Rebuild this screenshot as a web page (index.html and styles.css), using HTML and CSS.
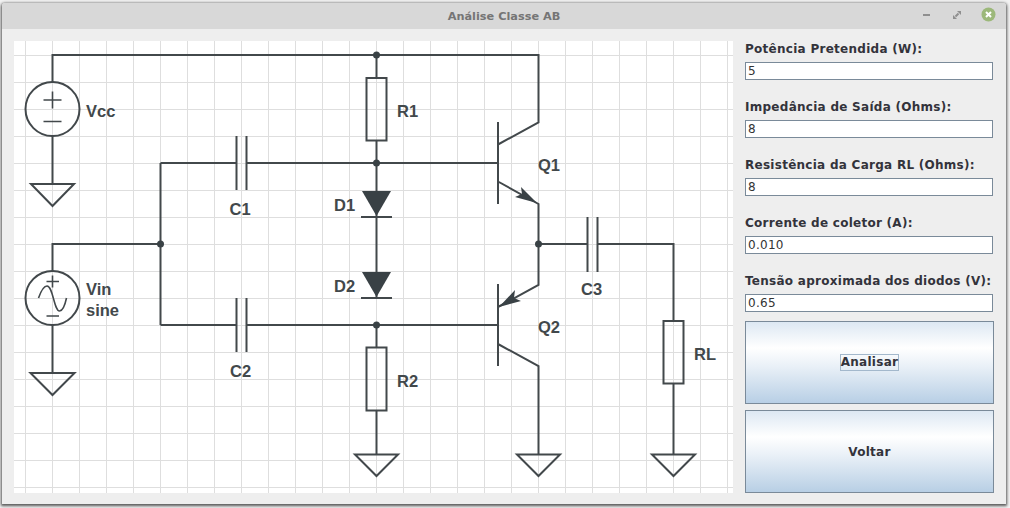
FILE: index.html
```html
<!DOCTYPE html>
<html lang="pt">
<head>
<meta charset="utf-8">
<title>Análise Classe AB</title>
<link rel="stylesheet" href="styles.css">
</head>
<body>
<div class="window">
  <header class="titlebar">
    <span class="title">Análise Classe AB</span>
    <div class="controls">
      <svg class="ctl" width="12" height="12" viewBox="0 0 12 12"><rect x="2" y="5" width="7" height="2" fill="#8f8f8f"/></svg>
      <svg class="ctl" width="12" height="12" viewBox="0 0 12 12"><path d="M6 2H10V6ZM2 6V10H6Z" fill="#8f8f8f"/><path d="M4.500 7.500L7.500 4.500" stroke="#8f8f8f" stroke-width="2"/></svg>
      <svg class="ctl close" width="15" height="15" viewBox="0 0 15 15"><circle cx="7.500" cy="7.500" r="7" fill="#9cb87a"/><path d="M5 5l5 5M10 5l-5 5" stroke="#fff" stroke-width="2"/></svg>
    </div>
  </header>
  <main class="content">
    <div class="canvas">
      <svg class="circuit" width="719" height="452" viewBox="14 41 719 452">
        <g class="wire">
          <path d="M52.500 82V55H538.500V122.500L498 144.500"/>
          <circle cx="52.500" cy="109" r="27"/>
          <path d="M52.500 136V184M31 184H74L52.500 206Z"/>
          <path d="M43.500 100H61.500M52.500 91.500V108.500M43.500 121.500H61.500" class="thin"/>
          <path d="M52.500 271V244H160.500M160.500 163V325"/>
          <circle cx="52.500" cy="298" r="27"/>
          <path d="M52.500 325V373M30.500 373H74.500L52.500 395Z"/>
          <path d="M46.500 281.500H59M52.500 275.500V287.500M46.500 316H59" class="thin"/>
          <path d="M38.500 298C41 291 44 286 47 286C53 286 54 311 59.500 311C63 311 65 305 66.500 298" class="thin"/>
          <path d="M160.500 163H236.500M246.500 163H498M236.500 136V190M246.500 136V190"/>
          <path d="M160.500 325H236.500M246.500 325H498M236.500 298V352M246.500 298V352"/>
          <path d="M376.500 55V78M376.500 141V298M376.500 325V347M376.500 411V454.500"/>
          <rect x="366.500" y="78" width="20" height="62.500"/>
          <rect x="366.500" y="347.500" width="20" height="63"/>
          <path d="M361 217H392M361 298H392"/>
          <path d="M355 454.500H398L376.500 476Z"/>
          <path d="M498 122V204M498 181.500L538.500 204V285L498 307M498 284V366M498 344L538.500 366V454.500"/>
          <path d="M517 454.500H560L538.500 476Z"/>
          <path d="M538.500 244H587.500M597.500 244H673.500V321M587.500 217V272M597.500 217V272"/>
          <rect x="663.500" y="321" width="20" height="62.500"/>
          <path d="M673.500 383.500V454.500M652 454.500H695L673.500 476Z"/>
        </g>
        <g class="solid">
          <circle cx="376.500" cy="55" r="3.500"/>
          <circle cx="160.500" cy="244" r="3.500"/>
          <circle cx="376.500" cy="163" r="3.500"/>
          <circle cx="376.500" cy="325" r="3.500"/>
          <circle cx="538.500" cy="244" r="3.500"/>
          <path d="M362 191H391L376.500 216Z"/>
          <path d="M362 272H391L376.500 297Z"/>
          <path d="M537 203L515 197L522 194L521 187Z"/>
          <path d="M499 307L515 290L514 298L521 301Z"/>
        </g>
        <g class="label">
          <text x="86" y="117">Vcc</text>
          <text x="397" y="117">R1</text>
          <text x="538" y="171">Q1</text>
          <text x="229.500" y="215">C1</text>
          <text x="334" y="211">D1</text>
          <text x="334" y="292">D2</text>
          <text x="86" y="295">Vin</text>
          <text x="86" y="316">sine</text>
          <text x="230" y="377">C2</text>
          <text x="397" y="387">R2</text>
          <text x="538" y="333">Q2</text>
          <text x="581" y="295">C3</text>
          <text x="694" y="360">RL</text>
        </g>
      </svg>
    </div>
    <aside class="panel">
      <label class="field"><span class="caption">Potência Pretendida (W):</span><input class="input" type="text" value="5"></label>
      <label class="field"><span class="caption">Impedância de Saída (Ohms):</span><input class="input" type="text" value="8"></label>
      <label class="field"><span class="caption">Resistência da Carga RL (Ohms):</span><input class="input" type="text" value="8"></label>
      <label class="field"><span class="caption">Corrente de coletor (A):</span><input class="input" type="text" value="0.010"></label>
      <label class="field"><span class="caption">Tensão aproximada dos diodos (V):</span><input class="input" type="text" value="0.65"></label>
      <button class="btn" type="button"><span class="focus">Analisar</span></button>
      <button class="btn" type="button"><span class="nofocus">Voltar</span></button>
    </aside>
  </main>
</div>
</body>
</html>
```
FILE: styles.css
```css
html, body {
  margin: 0;
  height: 100%;
  overflow: hidden;
  background: #f2f2f2;
}
.window {
  margin: 3px 0 0 2px;
  width: 1004px;
  height: 501px;
  background: #eeeeee;
  box-shadow: 0 1px 3px 1px #555555;
  display: flex;
  flex-direction: column;
  border-radius: 3px 3px 0 0;
}
.titlebar {
  height: 26px;
  flex: none;
  background: #d8d8d8;
  display: flex;
  align-items: center;
  justify-content: center;
  position: relative;
  border-radius: 3px 3px 0 0;
}
.title {
  font: bold 11.300px "DejaVu Sans", sans-serif;
  color: #757575;
}
.controls {
  position: absolute;
  right: 10px;
  top: 4px;
  display: flex;
  align-items: center;
  gap: 18px;
}
.ctl { display: block; }
.content {
  flex: 1;
  display: flex;
  padding: 12px 12px 11px 12px;
  gap: 12px;
  min-height: 0;
}
.canvas {
  width: 719px;
  height: 452px;
  flex: none;
  background-color: #ffffff;
  background-image:
    linear-gradient(to right, #dedede 1px, transparent 1px),
    linear-gradient(to bottom, #dedede 1px, transparent 1px);
  background-size: 27px 27px;
  background-position: 11px 14px;
}
.circuit { display: block; }
.wire {
  fill: none;
  stroke: #42484b;
  stroke-width: 2;
}
.wire .thin { stroke-width: 1.600; }
.solid { fill: #394145; }
.label {
  font: bold 16.500px "Liberation Sans", Arial, sans-serif;
  fill: #42484b;
}
.panel {
  flex: 1;
  display: flex;
  flex-direction: column;
  gap: 6px;
  min-width: 0;
}
.field {
  flex: none;
  display: flex;
  flex-direction: column;
  height: 39px;
  margin-bottom: 13px;
}
.field:last-of-type { margin-bottom: 3px; }
.caption {
  font: bold 12px/17px "DejaVu Sans", sans-serif;
  color: #33333b;
  height: 21px;
  letter-spacing: 0.270px;
}
.input {
  box-sizing: border-box;
  width: 248px;
  height: 18px;
  margin: 0;
  padding: 0 1px 0 2px;
  background: #ffffff;
  border: 1px solid #7a8a99;
  border-radius: 0;
  outline: 0;
  font: 12px "DejaVu Sans", sans-serif;
  color: #333333;
  letter-spacing: 0.270px;
}
.btn {
  flex: none;
  box-sizing: border-box;
  width: 249px;
  height: 83px;
  margin: 0;
  padding: 0;
  border: 1px solid #7a8a99;
  background: linear-gradient(to bottom, #dde8f3 0%, #ffffff 32%, #e9f0f7 55%, #b8cfe5 100%);
  font: bold 12px "DejaVu Sans", sans-serif;
  color: #33333b;
  letter-spacing: 0.270px;
}
.focus {
  display: inline-block;
  padding: 0 0 1px;
  line-height: 14px;
  border: 1px solid #a3b8cc;
}
.nofocus { display: inline-block; }
```
